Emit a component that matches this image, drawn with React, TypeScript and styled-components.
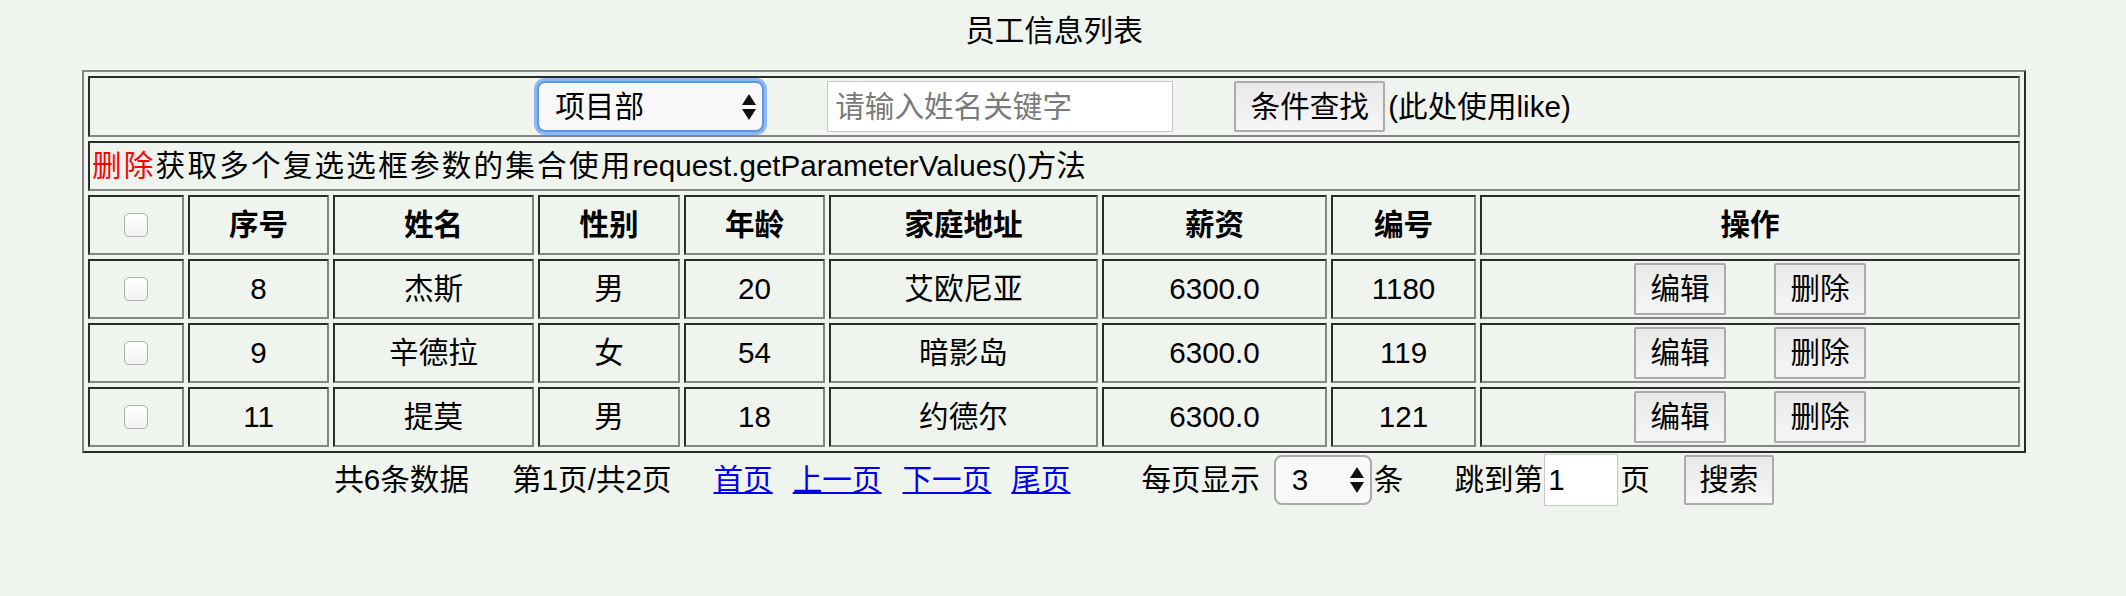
import React from "react";
import styled, { createGlobalStyle } from "styled-components";

interface Employee {
    id: number;
    name: string;
    gender: string;
    age: number;
    address: string;
    salary: string;
    code: string;
}

const employees: Employee[] = [
    { id: 8, name: "杰斯", gender: "男", age: 20, address: "艾欧尼亚", salary: "6300.0", code: "1180" },
    { id: 9, name: "辛德拉", gender: "女", age: 54, address: "暗影岛", salary: "6300.0", code: "119" },
    { id: 11, name: "提莫", gender: "男", age: 18, address: "约德尔", salary: "6300.0", code: "121" },
];

// widths of the columns, last one takes the rest
const colWidths = [96, 141, 201, 142, 141, 269, 225, 145];
const headers = ["序号", "姓名", "性别", "年龄", "家庭地址", "薪资", "编号", "操作"];

export default function App() {
    return (
        <>
            <GlobalStyle />
            <Page>
                <Title>员工信息列表</Title>
                <Table>
                    <colgroup>
                        {colWidths.map((w, i) => (
                            <col key={i} style={{ width: w }} />
                        ))}
                        <col />
                    </colgroup>
                    <tbody>
                        <Row $h={61}>
                            <Cell colSpan={9}>
                                <SearchBar>
                                    <SelectBox $w={227} $h={51}>
                                        <Select $focus defaultValue="项目部">
                                            <option>项目部</option>
                                            <option>研发部</option>
                                            <option>市场部</option>
                                        </Select>
                                        <Arrows />
                                    </SelectBox>
                                    <TextInput $w={346} $h={51} $ml={63} placeholder="请输入姓名关键字" />
                                    <Button $w={151} $h={51} $ml={61}>条件查找</Button>
                                    <Note>(此处使用like)</Note>
                                </SearchBar>
                            </Cell>
                        </Row>
                        <Row $h={50}>
                            <Cell colSpan={9} $left>
                                <DeleteLink href="#">删除</DeleteLink>
                                <Spaced>获取多个复选选框参数的集合使用</Spaced>
                                request.getParameterValues()方法
                            </Cell>
                        </Row>
                        <Row $h={60}>
                            <HeadCell>
                                <Check type="checkbox" />
                            </HeadCell>
                            {headers.map((h) => (
                                <HeadCell key={h}>{h}</HeadCell>
                            ))}
                        </Row>
                        {employees.map((e) => (
                            <Row $h={60} key={e.id}>
                                <Cell>
                                    <Check type="checkbox" />
                                </Cell>
                                <Cell>{e.id}</Cell>
                                <Cell>{e.name}</Cell>
                                <Cell>{e.gender}</Cell>
                                <Cell>{e.age}</Cell>
                                <Cell>{e.address}</Cell>
                                <Cell>{e.salary}</Cell>
                                <Cell>{e.code}</Cell>
                                <Cell>
                                    <Actions>
                                        <Button $w={92} $h={52}>编辑</Button>
                                        <Button $w={92} $h={52}>删除</Button>
                                    </Actions>
                                </Cell>
                            </Row>
                        ))}
                    </tbody>
                </Table>
                <Pager>
                    <Info>共6条数据</Info>
                    <Info $ml={43}>第1页/共2页</Info>
                    <PageLink href="#" $ml={42}>首页</PageLink>
                    <PageLink href="#" $ml={20}>上一页</PageLink>
                    <PageLink href="#" $ml={21}>下一页</PageLink>
                    <PageLink href="#" $ml={20}>尾页</PageLink>
                    <Info $ml={71}>每页显示</Info>
                    <SelectBox $w={98} $h={50} $ml={14}>
                        <Select defaultValue="3">
                            <option>3</option>
                            <option>5</option>
                            <option>10</option>
                        </Select>
                        <Arrows />
                    </SelectBox>
                    <Info $ml={2}>条</Info>
                    <Info $ml={51}>跳到第</Info>
                    <TextInput $w={74} $h={52} $ml={1} $pad={3} defaultValue="1" />
                    <Info $ml={2}>页</Info>
                    <Button $w={90} $h={50} $ml={34}>搜索</Button>
                </Pager>
            </Page>
        </>
    );
}

const Arrows = () => (
    <ArrowIcon width="14" height="26" viewBox="0 0 14 26">
        <polygon points="7,0 14,11 0,11" fill="#111" />
        <polygon points="0,15 14,15 7,26" fill="#111" />
    </ArrowIcon>
);

const GlobalStyle = createGlobalStyle`
    html, body {
        margin: 0;
        padding: 0;
        background: #eff4ee;
    }
    body {
        font-family: "Liberation Sans", "Noto Sans CJK SC", sans-serif;
        font-size: 29.6px;
        line-height: 36px;
        color: #000;
    }
`;

const Page = styled.div`
    width: 1944px;
    margin-left: 82px;
    padding-top: 13px;
    min-height: 583px;
`;

const Title = styled.div`
    text-align: center;
    height: 36px;
    margin-bottom: 21px;
`;

const Table = styled.table`
    width: 1944px;
    table-layout: fixed;
    border-collapse: separate;
    border-spacing: 4px;
    border-style: solid;
    border-width: 2px;
    border-color: #858585 #2b2b2b #2b2b2b #858585;
`;

const Row = styled.tr<{ $h: number }>`
    height: ${(p) => p.$h}px;
`;

const Cell = styled.td<{ $left?: boolean }>`
    padding: 2px;
    border-style: solid;
    border-width: 2px;
    border-color: #2b2b2b #858585 #858585 #2b2b2b;
    text-align: ${(p) => (p.$left ? "left" : "center")};
    vertical-align: middle;
    white-space: nowrap;
`;

const HeadCell = styled.th`
    padding: 2px;
    border-style: solid;
    border-width: 2px;
    border-color: #2b2b2b #858585 #858585 #2b2b2b;
    text-align: center;
    vertical-align: middle;
    font-weight: bold;
`;

const SearchBar = styled.div`
    display: flex;
    align-items: center;
    justify-content: center;
`;

const SelectBox = styled.span<{ $w: number; $h: number; $ml?: number }>`
    position: relative;
    display: inline-flex;
    flex: none;
    width: ${(p) => p.$w}px;
    height: ${(p) => p.$h}px;
    margin-left: ${(p) => p.$ml ?? 0}px;
`;

const Select = styled.select<{ $focus?: boolean }>`
    appearance: none;
    -webkit-appearance: none;
    width: 100%;
    height: 100%;
    box-sizing: border-box;
    margin: 0;
    padding: 0 0 0 16px;
    font: inherit;
    color: #000;
    background: #f8f8f8;
    border: 2px solid ${(p) => (p.$focus ? "#5e98e4" : "#a9a9a9")};
    border-radius: 8px;
    box-shadow: ${(p) => (p.$focus ? "0 0 0 3px #8db9f3" : "none")};
    outline: none;
`;

const ArrowIcon = styled.svg`
    position: absolute;
    right: 8px;
    top: 50%;
    transform: translateY(-50%);
    pointer-events: none;
`;

const TextInput = styled.input<{ $w: number; $h: number; $ml?: number; $pad?: number }>`
    flex: none;
    box-sizing: border-box;
    width: ${(p) => p.$w}px;
    height: ${(p) => p.$h}px;
    margin: 0 0 0 ${(p) => p.$ml ?? 0}px;
    padding: 0 0 0 ${(p) => p.$pad ?? 7}px;
    font: inherit;
    color: #000;
    background: #fff;
    border: 1px solid #c6c6c6;
    outline: none;
    &::placeholder {
        color: #7a7a7a;
    }
`;

const Button = styled.button<{ $w: number; $h: number; $ml?: number }>`
    flex: none;
    box-sizing: border-box;
    width: ${(p) => p.$w}px;
    height: ${(p) => p.$h}px;
    margin: 0 0 0 ${(p) => p.$ml ?? 0}px;
    padding: 0;
    font: inherit;
    color: #000;
    background: linear-gradient(to bottom, #e9e9e9, #f6f6f6);
    border: 2px solid #ababab;
    border-radius: 2px;
`;

const Note = styled.span`
    margin-left: 3px;
`;

const DeleteLink = styled.a`
    color: #ff0000;
    text-decoration: none;
    letter-spacing: 2.2px;
`;

const Spaced = styled.span`
    letter-spacing: 2.2px;
`;

const Check = styled.input`
    appearance: none;
    -webkit-appearance: none;
    display: block;
    margin: 0 auto;
    width: 24px;
    height: 24px;
    box-sizing: border-box;
    border: 1px solid #b0b0b0;
    border-radius: 5px;
    background: linear-gradient(to bottom, #ffffff, #f1f1f1);
    box-shadow: inset 0 1px 1px rgba(0, 0, 0, 0.05);
`;

const Actions = styled.div`
    display: flex;
    justify-content: center;
    align-items: center;
    gap: 48px;
`;

const Pager = styled.div`
    display: flex;
    align-items: center;
    justify-content: center;
    height: 52px;
    margin-top: 1px;
`;

const Info = styled.span<{ $ml?: number }>`
    margin-left: ${(p) => p.$ml ?? 0}px;
    white-space: nowrap;
`;

const PageLink = styled.a<{ $ml?: number }>`
    margin-left: ${(p) => p.$ml ?? 0}px;
    color: #0000ee;
    text-decoration: underline;
    white-space: nowrap;
`;
